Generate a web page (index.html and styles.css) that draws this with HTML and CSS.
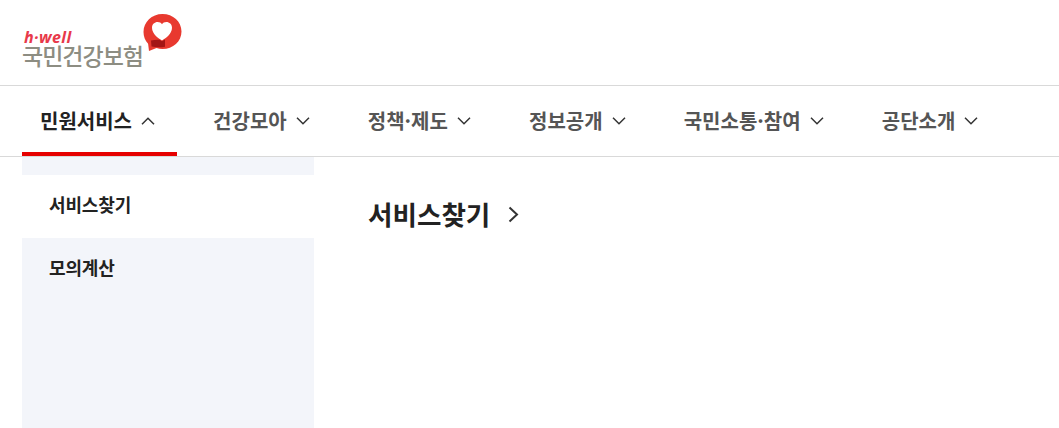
FILE: index.html
```html
<!DOCTYPE html>
<html lang="ko">
<head>
<meta charset="utf-8">
<title>국민건강보험</title>
<link rel="stylesheet" href="styles.css">
</head>
<body>
<header class="top">
  <a class="logo" href="#">
    <span class="logo-text">
      <span class="logo-en">h·well</span>
      <span class="logo-ko">국민건강보험</span>
    </span>
    <svg class="logo-mark" width="39" height="38" viewBox="0 0 39 38">
      <path d="M19.500 0C8.700 0 .5 8 .5 18c0 4.500 1.700 8.600 4.600 11.800L6 37l7.500-3.100c1.900.7 3.900 1.100 6 1.100C30 35 38.500 27.500 38.500 17.500S30 0 19.500 0z" fill="#e8392f"/>
      <path d="M19 26.500c-3.500-2.300-10-6.500-10-12.800 0-3.500 2.700-5.700 5.600-5.700 2 0 3.500.9 4.400 2.300.9-1.400 2.400-2.300 4.400-2.300 2.900 0 5.600 2.200 5.600 5.700 0 6.300-6.500 10.500-10 12.800z" fill="#fff"/>
      <path d="M8 26.500c3-.8 6-1 8.500-.8l2.500 1.500 3-1.800v7.400c-4.500.8-9.500.6-13.500-.2z" fill="#a31515"/>
    </svg>
  </a>
</header>
<nav class="gnb">
  <a class="gnb-item active" href="#"><span>민원서비스</span><svg class="chev" width="14" height="8" viewBox="0 0 14 8"><path d="M1 7.300 7 1.300l6 6"/></svg></a>
  <a class="gnb-item" href="#"><span>건강모아</span><svg class="chev" width="14" height="8" viewBox="0 0 14 8"><path d="M1 .7l6 6 6-6"/></svg></a>
  <a class="gnb-item" href="#"><span>정책·제도</span><svg class="chev" width="14" height="8" viewBox="0 0 14 8"><path d="M1 .7l6 6 6-6"/></svg></a>
  <a class="gnb-item" href="#"><span>정보공개</span><svg class="chev" width="14" height="8" viewBox="0 0 14 8"><path d="M1 .7l6 6 6-6"/></svg></a>
  <a class="gnb-item" href="#"><span>국민소통·참여</span><svg class="chev" width="14" height="8" viewBox="0 0 14 8"><path d="M1 .7l6 6 6-6"/></svg></a>
  <a class="gnb-item" href="#"><span>공단소개</span><svg class="chev" width="14" height="8" viewBox="0 0 14 8"><path d="M1 .7l6 6 6-6"/></svg></a>
</nav>
<div class="body">
  <aside class="side">
    <a class="side-item current" href="#">서비스찾기</a>
    <a class="side-item" href="#">모의계산</a>
  </aside>
  <main class="main">
    <h1 class="title">서비스찾기<svg class="title-chev" width="11" height="17" viewBox="0 0 11 17"><path d="M1.500 1.500l7.500 7-7.500 7"/></svg></h1>
  </main>
</div>
</body>
</html>
```

FILE: styles.css
```css
* { box-sizing: border-box; }
html, body { margin: 0; padding: 0; height: 100%; }
body {
  background: #fff;
  font-family: "Noto Sans CJK KR", "Noto Sans", sans-serif;
  display: flex;
  flex-direction: column;
  overflow: hidden;
}
a { text-decoration: none; color: inherit; }

.top {
  height: 86px;
  flex: none;
  border-bottom: 1px solid #d9d9d9;
  padding: 14px 0 0 22px;
}
.logo { display: flex; align-items: flex-start; }
.logo-text { display: flex; flex-direction: column; margin-top: 16px; }
.logo-en {
  font-family: "Open Sans", sans-serif;
  font-size: 16px;
  line-height: 14px;
  font-weight: 700;
  font-style: italic;
  letter-spacing: 0.400px;
  color: #e8394a;
  margin-left: 2px;
}
.logo-ko {
  font-size: 23px;
  line-height: 22px;
  font-weight: 500;
  color: #8d8d82;
  letter-spacing: -1px;
  white-space: nowrap;
}
.logo-mark { flex: none; }

.gnb {
  flex: none;
  height: 71px;
  display: flex;
  padding-left: 22px;
  border-bottom: 1px solid #d9d9d9;
}
.gnb-item {
  display: flex;
  align-items: center;
  gap: 9px;
  height: 70px;
  padding: 0 22px 0 18px;
  margin-right: 18.100px;
  font-size: 20px;
  font-weight: 600;
  color: #555;
  white-space: nowrap;
}
.gnb-item span { position: relative; top: -1px; }
.chev { fill: none; stroke: #333; stroke-width: 1.500; flex: none; }
.gnb-item.active { color: #222; font-weight: 700; border-bottom: 4px solid #e60000; padding-top: 4px; }

.body { flex: 1; display: flex; padding-left: 22px; min-height: 0; }
.side {
  width: 292px;
  flex: none;
  background: #f3f5fa;
  padding-top: 18px;
  display: flex;
  flex-direction: column;
}
.side-item {
  height: 63px;
  display: flex;
  align-items: center;
  padding: 0 0 6px 27px;
  font-size: 18px;
  font-weight: 700;
  color: #222;
  letter-spacing: -0.150px;
}
.side-item.current { background: #fff; }
.main { flex: 1; padding: 36px 0 0 54px; }
.title {
  margin: 0;
  display: flex;
  align-items: center;
  gap: 18px;
  font-size: 26.600px;
  line-height: 42px;
  font-weight: 700;
  color: #222;
}
.title-chev { fill: none; stroke: #333; stroke-width: 2; flex: none; }
```
